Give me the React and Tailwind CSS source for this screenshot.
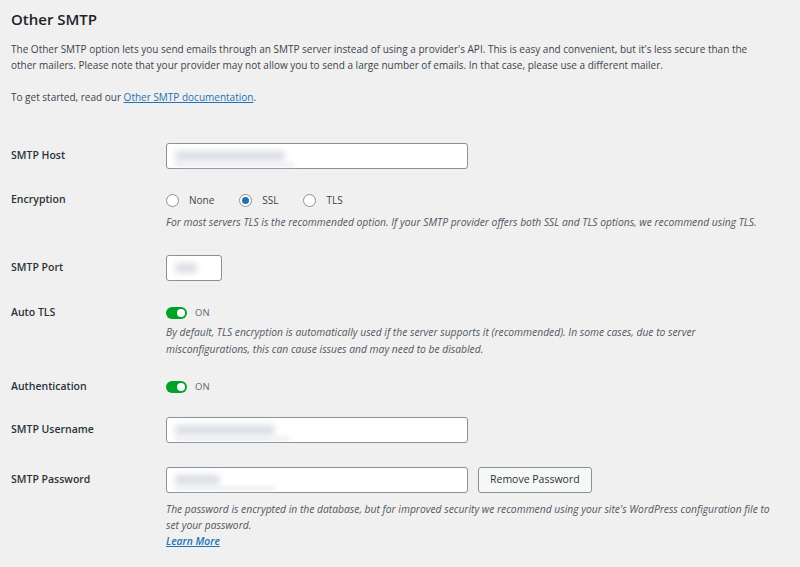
import React from 'react'

const Blur = ({ w = 110, w2 = 0 }) => (
  <div className="absolute left-[8px] top-[7px] flex flex-col gap-[2px] pointer-events-none">
    <div className="h-[10px] bg-gray-300/80 blur-[3px] rounded" style={{ width: w }} />
    {w2 > 0 && <div className="h-[3px] bg-gray-200 blur-[2px]" style={{ width: w2 }} />}
  </div>
)

const TextInput = ({ width = 'w-[302px]', blur = 110, blur2 = 0 }) => (
  <div className={`relative ${width} h-[26px] bg-white border border-[#8c8f94] rounded-[3px]`}>
    <Blur w={blur} w2={blur2} />
  </div>
)

const Radio = ({ label, checked }) => (
  <label className="flex items-center gap-[10px] mr-[25px]">
    <span className="w-[13px] h-[13px] rounded-full border border-[#8c8f94] bg-white flex items-center justify-center">
      {checked && <span className="w-[7px] h-[7px] rounded-full bg-[#2271b1]" />}
    </span>
    <span>{label}</span>
  </label>
)

const Toggle = () => (
  <div className="flex items-center gap-[8px] h-[16px]">
    <span className="w-[21px] h-[12px] rounded-full bg-[#00a32a] flex items-center justify-end pr-[2px]">
      <span className="w-[8px] h-[8px] rounded-full bg-white" />
    </span>
    <span className="text-[9.5px] text-[#646970]">ON</span>
  </div>
)

const Row = ({ label, h = 26, mt, children }) => (
  <div className={`flex ${mt}`}>
    <div className="w-[155px] shrink-0 flex items-center font-semibold text-[10.5px] text-[#2c3338]" style={{ height: h }}>
      {label}
    </div>
    <div className="w-[614px]">{children}</div>
  </div>
)

const Desc = ({ children, lh = 'leading-[17px]' }) => (
  <p className={`italic text-[#50575e] ${lh} text-[10.3px]`}>{children}</p>
)

export default function App() {
  return (
    <div
      className="w-[800px] h-[567px] bg-[#f0f0f1] text-[#3c434a] text-[10px] overflow-hidden px-[11px]"
      style={{ fontFamily: '"Segoe UI", "Open Sans", "Noto Sans", sans-serif' }}
    >
      <h2 className="pt-[8px] text-[15px] font-semibold text-[#1d2327] leading-[22px]">Other SMTP</h2>
      <p className="mt-[11px] leading-[16px] max-w-[760px]">
        The Other SMTP option lets you send emails through an SMTP server instead of using a provider's API. This is easy and convenient, but it's less secure than the other mailers. Please note that your provider may not allow you to send a large number of emails. In that case, please use a different mailer.
      </p>
      <p className="mt-[16px] leading-[16px]">
        To get started, read our{' '}
        <a className="text-[#2271b1] underline">Other SMTP documentation</a>.
      </p>

      <Row label="SMTP Host" mt="mt-[38px]">
        <TextInput blur={110} blur2={120} />
      </Row>

      <Row label="Encryption" h={16} mt="mt-[23px]">
        <div className="flex items-center h-[16px]">
          <Radio label="None" />
          <Radio label="SSL" checked />
          <Radio label="TLS" />
        </div>
        <div className="mt-[6px]">
          <Desc>For most servers TLS is the recommended option. If your SMTP provider offers both SSL and TLS options, we recommend using TLS.</Desc>
        </div>
      </Row>

      <Row label="SMTP Port" mt="mt-[24px]">
        <TextInput width="w-[56px]" blur={22} />
      </Row>

      <Row label="Auto TLS" h={16} mt="mt-[24px]">
        <Toggle />
        <div className="mt-[3px]">
          <Desc>
            By default, TLS encryption is automatically used if the server supports it (recommended). In some cases, due to server misconfigurations, this can cause issues and may need to be disabled.
          </Desc>
        </div>
      </Row>

      <Row label="Authentication" h={16} mt="mt-[21px]">
        <Toggle />
      </Row>

      <Row label="SMTP Username" mt="mt-[22px]">
        <TextInput blur={100} blur2={115} />
      </Row>

      <Row label="SMTP Password" mt="mt-[24px]">
        <div className="flex items-center gap-[10px]">
          <TextInput blur={45} blur2={100} />
          <button className="h-[26px] px-[11px] bg-[#f6f7f7] border border-[#8c8f94] rounded-[3px] text-[#2c3338] text-[10.5px]">
            Remove Password
          </button>
        </div>
        <div className="mt-[8px]">
          <Desc lh="leading-[16px]">
            The password is encrypted in the database, but for improved security we recommend using your site's WordPress configuration file to set your password.
          </Desc>
          <a className="block italic font-semibold text-[#2271b1] underline leading-[16px] text-[10.3px]">Learn More</a>
        </div>
      </Row>
    </div>
  )
}
